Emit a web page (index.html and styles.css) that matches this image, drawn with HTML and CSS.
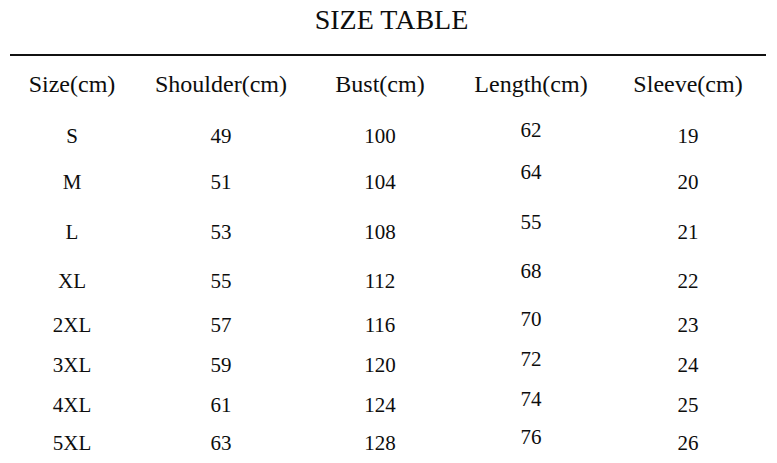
FILE: index.html
```html
<!DOCTYPE html>
<html>
<head>
<meta charset="utf-8">
<link rel="stylesheet" href="styles.css">
</head>
<body>
<div class="page">
  <h1 class="title">SIZE TABLE</h1>
  <div class="rule"></div>
  <div class="table">
    <div class="th">Size(cm)</div><div class="th">Shoulder(cm)</div><div class="th">Bust(cm)</div><div class="th">Length(cm)</div><div class="th">Sleeve(cm)</div>
    <div class="td">S</div><div class="td">49</div><div class="td">100</div><div class="td len">62</div><div class="td">19</div>
    <div class="td">M</div><div class="td">51</div><div class="td">104</div><div class="td len l2">64</div><div class="td">20</div>
    <div class="td">L</div><div class="td">53</div><div class="td">108</div><div class="td len l2">55</div><div class="td">21</div>
    <div class="td">XL</div><div class="td">55</div><div class="td">112</div><div class="td len l2">68</div><div class="td">22</div>
    <div class="td">2XL</div><div class="td">57</div><div class="td">116</div><div class="td len">70</div><div class="td">23</div>
    <div class="td">3XL</div><div class="td">59</div><div class="td">120</div><div class="td len">72</div><div class="td">24</div>
    <div class="td">4XL</div><div class="td">61</div><div class="td">124</div><div class="td len">74</div><div class="td">25</div>
    <div class="td">5XL</div><div class="td">63</div><div class="td">128</div><div class="td len">76</div><div class="td">26</div>
  </div>
</div>
</body>
</html>
```
FILE: styles.css
```css
html, body {
  margin: 0;
  padding: 0;
  background: #fff;
}
body {
  font-family: "Liberation Serif", "Times New Roman", serif;
  color: #0d0d0d;
}
.page {
  width: 777px;
  height: 463px;
  overflow: hidden;
}
.title {
  margin: 0;
  font-size: 28px;
  font-weight: normal;
  line-height: 40px;
  height: 40px;
  text-align: center;
  padding-left: 6px;
}
.rule {
  margin: 14px 11px 0 10px;
  height: 2px;
  background: #111;
}
.table {
  display: grid;
  grid-template-columns: 144px 154px 164px 138px 176px;
  grid-template-rows: 43px 49px 46px 50px 49px 44px 40px 40px 38px;
}
.th, .td {
  text-align: center;
  align-self: end;
}
.th {
  font-size: 24px;
  line-height: 30px;
}
.td {
  font-size: 21px;
  line-height: 24px;
}
.len {
  padding-bottom: 6px;
}
.len.l2 {
  padding-bottom: 10px;
}
```
